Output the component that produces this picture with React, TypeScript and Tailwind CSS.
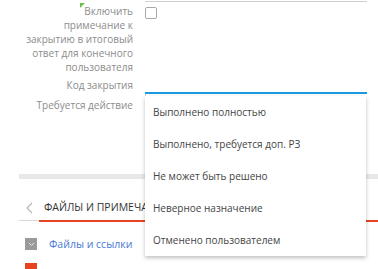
import React from "react";

const options = [
  "Выполнено полностью",
  "Выполнено, требуется доп. РЗ",
  "Не может быть решено",
  "Неверное назначение",
  "Отменено пользователем",
];

function Label({ children }: { children: React.ReactNode }) {
  return (
    <div className="whitespace-nowrap text-right text-[10px] leading-[14px] text-[#8c8c8c]">
      {children}
    </div>
  );
}

export default function App() {
  return (
    <div
      className="relative h-[269px] w-[378px] overflow-hidden bg-white"
      style={{ fontFamily: '"Open Sans", "Noto Sans", sans-serif' }}
    >
      {/* form part */}
      <div className="grid grid-cols-[133px_222px] gap-x-[12px]">
        <div />
        <div className="h-[2px] border-b border-[#cfcfcf]" />

        <div className="mt-[2px]">
          <Label>
            <span className="relative">
              <span className="absolute -left-[4px] -top-[1px] h-0 w-0 border-l-[5px] border-b-[5px] border-l-[#6cc04a] border-b-transparent" />
              Включить
            </span>
            <br />
            примечание к
            <br />
            закрытию в итоговый
            <br />
            ответ для конечного
            <br />
            пользователя
          </Label>
        </div>
        <div className="pt-[5px]">
          <div className="h-[12px] w-[12px] rounded-[2px] border border-[#a8a8a8]" />
        </div>

        <div className="mt-[4px]">
          <Label>Код закрытия</Label>
        </div>
        <div className="h-[20px] border-b-2 border-[#1a9be0]" />

        <div className="mt-[4px]">
          <Label>Требуется действие</Label>
        </div>
        <div className="h-[30px] border-l border-[#d0d0d0]" />
      </div>

      {/* section */}
      <div className="ml-[19px] mt-[50px] h-[5px] bg-[#e6e8ea]" />
      <div className="ml-[19px] mt-[21px] flex h-[21px] items-start border-b border-[#d8d8d8]">
        <div className="flex w-[20px] justify-center pt-[2px]">
          <svg width="7" height="12" viewBox="0 0 7 12">
            <path d="M6 1L1 6l5 5" fill="none" stroke="#b5b5b5" strokeWidth="1.2" />
          </svg>
        </div>
        <div className="relative -mb-[1px] h-[22px] flex-1 border-b-2 border-[#e8431f] pl-[5px] text-[10.5px] leading-[14px] text-[#333] whitespace-nowrap">
          ФАЙЛЫ И ПРИМЕЧАНИЯ
        </div>
      </div>
      <div className="ml-[25px] mt-[16px] flex items-center gap-[12px]">
        <div className="flex h-[12px] w-[12px] items-center justify-center bg-[#9a9a9a]">
          <svg width="7" height="5" viewBox="0 0 7 5">
            <path d="M1 1l2.5 2.5L6 1" fill="none" stroke="#e8e8e8" strokeWidth="1" />
          </svg>
        </div>
        <span className="text-[10.5px] leading-[14px] text-[#4a79d6]">Файлы и ссылки</span>
      </div>
      <div className="ml-[25px] mt-[12px] h-[6px] w-[12px] bg-[#e8431f]" />

      {/* dropdown overlay */}
      <div className="absolute left-[145px] top-[96px] w-[221px] bg-white shadow-[0_2px_4px_rgba(0,0,0,0.25)]">
        {options.map((o) => (
          <div key={o} className="flex h-[32px] items-center pl-[8px] text-[10px] text-[#444]">
            {o}
          </div>
        ))}
      </div>
    </div>
  );
}
